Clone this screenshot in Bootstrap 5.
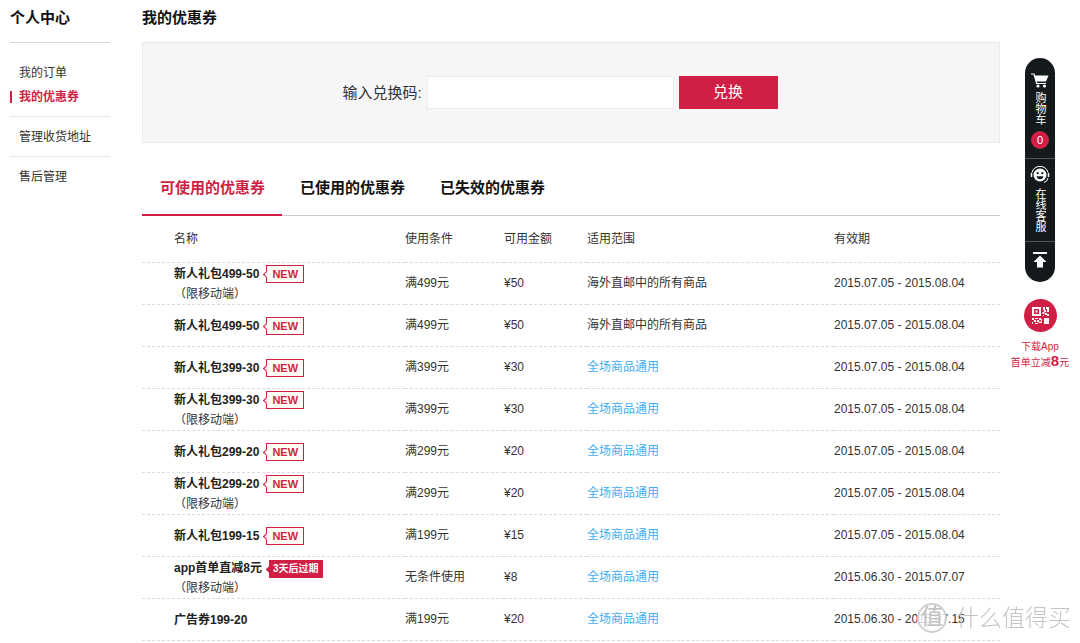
<!DOCTYPE html>
<html lang="zh-CN">
<head>
<meta charset="utf-8">
<meta name="viewport" content="width=device-width, initial-scale=1">
<title>我的优惠券</title>
<link href="https://cdn.jsdelivr.net/npm/bootstrap@5.3.0/dist/css/bootstrap.min.css" rel="stylesheet">
<script src="https://cdn.jsdelivr.net/npm/bootstrap@5.3.0/dist/js/bootstrap.bundle.min.js" defer></script>
<style>
:root { --brand: #d01f44; --line: #d6d6d6; --ink: #14191c; }
body { font: 12px/20px "Liberation Sans", "Noto Sans CJK SC", sans-serif; color: #333; background: #fff; }
a { color: inherit; text-decoration: none; }
.page-title { font-size: 15px; line-height: 20px; font-weight: 700; color: #111; margin: 0; padding: 8px 0 14px; }
.side-col { width: 100px; margin-left: 10px; margin-right: 32px; }
.side-group { border-bottom: 1px solid #e8e8e8; padding: 8px 0 7px; margin: 0; }
.side-group:first-of-type { border-top: 1px solid var(--line); padding-top: 18px; }
.side-group:last-of-type { border-bottom: 0; }
.side-group a { display: block; line-height: 24px; padding-left: 9px; }
.side-group a.active { color: var(--brand); font-weight: 700; background: linear-gradient(var(--brand), var(--brand)) left center / 2px 12px no-repeat; }
.redeem { background: #f6f6f6; border: 1px solid #ebebeb; padding: 33px 22px 33px 0; gap: 5px; }
.redeem label { font-size: 15px; }
.redeem input { width: 247px; height: 33px; border: 1px solid #e9eeee; border-radius: 0; padding: 4px 8px; font-size: 14px; }
.redeem .btn { width: 99px; height: 33px; border: 0; border-radius: 0; padding: 0; background: var(--brand); color: #fff; font-size: 15px; }
.coupon-tabs { border-bottom: 1px solid #ccc; margin-top: 25px; }
.coupon-tabs .nav-link { padding: 8px 17px 14px 18px; border-bottom: 2px solid transparent; margin-bottom: -1px; font-size: 15px; line-height: 24px; font-weight: 700; color: #111; }
.coupon-tabs .nav-link.active { color: var(--brand); border-color: var(--brand); }
.coupons { table-layout: fixed; color: #333; }
.coupons th, .coupons td { padding: 0; height: 42px; border: 0; border-bottom: 1px dashed #dcdcdc; vertical-align: middle; color: inherit; background: none; }
.coupons thead th { height: 46px; font-weight: 400; }
.coupons tr > :first-child { padding-left: 32px; }
.coupons tbody th { font-weight: 400; padding-top: 1px; }
.coupons td a { color: #43adf2; }
.coupons strong { color: #222; }
.tag { display: inline-block; position: relative; margin-left: 7px; padding: 0 5px; line-height: 16px; border: 1px solid var(--brand); background: #fffdf6; color: var(--brand); font-size: 11px; font-weight: 700; }
.tag::before { content: ""; position: absolute; left: -3px; top: 6px; width: 5px; height: 5px; border: solid var(--brand); border-width: 0 0 1px 1px; background: inherit; transform: rotate(45deg); }
.tag-due { background: var(--brand); color: #fff; padding: 0 3px; font-size: 10px; }
.float-col { width: 80px; padding-top: 58px; }
.pill { width: 30px; background: var(--ink); color: #fff; border-radius: 15px; }
.pill > * { width: 100%; }
.pill > * + * { border-top: 1px solid #50565a; }
.pill .cart-link { height: 100px; padding-top: 15px; }
.pill .help-link { height: 83px; padding-top: 7px; }
.pill .top-btn { height: 41px; padding: 0; background: none; color: #fff; border-width: 1px 0 0; border-style: solid; }
.upright { writing-mode: vertical-rl; font-size: 11px; line-height: 12px; }
.count { width: 18px; height: 18px; line-height: 18px; background: var(--brand); font-size: 11px; margin-top: 6px; }
.qr { width: 33px; height: 33px; background: var(--brand); margin: 17px 0 8px; }
.app-note { color: var(--brand); font-size: 10px; line-height: 14px; }
.app-note b { font-size: 15px; }
.watermark { position: fixed; right: 9px; bottom: 8px; color: #c4c4c4; font-size: 23px; line-height: 34px; font-weight: 300; gap: 9px; }
.watermark .disc { width: 30px; height: 30px; line-height: 24px; border: 2px solid #d0d0d0; background: rgba(255,255,255,.8); font-size: 22px; font-weight: 500; }
</style>
</head>
<body>
<div class="d-flex align-items-start">
  <nav class="side-col flex-shrink-0" aria-label="个人中心">
    <h2 class="page-title">个人中心</h2>
    <ul class="list-unstyled side-group">
      <li><a href="#">我的订单</a></li>
      <li><a href="#" class="active" aria-current="page">我的优惠券</a></li>
    </ul>
    <ul class="list-unstyled side-group"><li><a href="#">管理收货地址</a></li></ul>
    <ul class="list-unstyled side-group"><li><a href="#">售后管理</a></li></ul>
  </nav>

  <main class="flex-grow-1">
    <h1 class="page-title">我的优惠券</h1>
    <form class="redeem d-flex justify-content-center align-items-center">
      <label for="code">输入兑换码:</label>
      <input id="code" type="text" class="form-control">
      <button type="button" class="btn">兑换</button>
    </form>

    <ul class="nav coupon-tabs">
      <li class="nav-item"><a class="nav-link active" href="#">可使用的优惠券</a></li>
      <li class="nav-item"><a class="nav-link" href="#">已使用的优惠券</a></li>
      <li class="nav-item"><a class="nav-link" href="#">已失效的优惠券</a></li>
    </ul>

    <table class="table coupons mb-0">
      <colgroup><col width="263"><col width="99"><col width="83"><col width="247"><col width="166"></colgroup>
      <thead>
        <tr><th scope="col">名称</th><th scope="col">使用条件</th><th scope="col">可用金额</th><th scope="col">适用范围</th><th scope="col">有效期</th></tr>
      </thead>
      <tbody>
        <tr><th scope="row"><strong>新人礼包499-50</strong><span class="tag">NEW</span><br>（限移动端）</th><td>满499元</td><td>¥50</td><td>海外直邮中的所有商品</td><td>2015.07.05 - 2015.08.04</td></tr>
        <tr><th scope="row"><strong>新人礼包499-50</strong><span class="tag">NEW</span></th><td>满499元</td><td>¥50</td><td>海外直邮中的所有商品</td><td>2015.07.05 - 2015.08.04</td></tr>
        <tr><th scope="row"><strong>新人礼包399-30</strong><span class="tag">NEW</span></th><td>满399元</td><td>¥30</td><td><a href="#">全场商品通用</a></td><td>2015.07.05 - 2015.08.04</td></tr>
        <tr><th scope="row"><strong>新人礼包399-30</strong><span class="tag">NEW</span><br>（限移动端）</th><td>满399元</td><td>¥30</td><td><a href="#">全场商品通用</a></td><td>2015.07.05 - 2015.08.04</td></tr>
        <tr><th scope="row"><strong>新人礼包299-20</strong><span class="tag">NEW</span></th><td>满299元</td><td>¥20</td><td><a href="#">全场商品通用</a></td><td>2015.07.05 - 2015.08.04</td></tr>
        <tr><th scope="row"><strong>新人礼包299-20</strong><span class="tag">NEW</span><br>（限移动端）</th><td>满299元</td><td>¥20</td><td><a href="#">全场商品通用</a></td><td>2015.07.05 - 2015.08.04</td></tr>
        <tr><th scope="row"><strong>新人礼包199-15</strong><span class="tag">NEW</span></th><td>满199元</td><td>¥15</td><td><a href="#">全场商品通用</a></td><td>2015.07.05 - 2015.08.04</td></tr>
        <tr><th scope="row"><strong>app首单直减8元</strong><span class="tag tag-due">3天后过期</span><br>（限移动端）</th><td>无条件使用</td><td>¥8</td><td><a href="#">全场商品通用</a></td><td>2015.06.30 - 2015.07.07</td></tr>
        <tr><th scope="row"><strong>广告券199-20</strong></th><td>满199元</td><td>¥20</td><td><a href="#">全场商品通用</a></td><td>2015.06.30 - 2015.07.15</td></tr>
      </tbody>
    </table>
  </main>

  <aside class="float-col flex-shrink-0 d-flex flex-column align-items-center">
    <div class="pill d-flex flex-column overflow-hidden">
      <a href="#" class="cart-link d-flex flex-column align-items-center">
        <svg width="18" height="15" viewBox="0 0 18 15" class="mb-1" aria-hidden="true"><path d="M0 1h3l2.600 9.500H15" fill="none" stroke="#fff" stroke-width="1.200"/><path d="M3.500 2.500H17.500L15 8.500H5.300z" fill="#fff"/><circle cx="7" cy="13" r="1.600" fill="#fff"/><circle cx="13.500" cy="13" r="1.600" fill="#fff"/></svg>
        <span class="upright">购物车</span>
        <span class="count rounded-circle text-center">0</span>
      </a>
      <a href="#" class="help-link d-flex flex-column align-items-center">
        <svg width="20" height="18" viewBox="0 0 20 18" class="mb-1" aria-hidden="true"><circle cx="10" cy="9" r="6.500" fill="#fff"/><path d="M2 6.500A8.300 8.300 0 0 1 18 6.500" fill="none" stroke="#fff" stroke-width="1"/><path d="M1.500 7v4M18.500 7v4" stroke="#fff" stroke-width="1.500"/><path d="M18 12q-.500 3.500-4 4.500" fill="none" stroke="#fff"/><circle cx="7.700" cy="7.200" r="1.100" fill="#14191c"/><circle cx="12.300" cy="7.200" r="1.100" fill="#14191c"/><path d="M6.500 10.200h7q-.800 3-3.500 3t-3.500-3z" fill="#14191c"/></svg>
        <span class="upright">在线客服</span>
      </a>
      <button type="button" class="top-btn" aria-label="返回顶部">
        <svg class="d-block mx-auto mb-1" width="14" height="16" viewBox="0 0 14 16" aria-hidden="true"><path d="M0 0h14v2H0zM7 3.500L13.500 10H10v5.500H4V10H.500z" fill="#fff"/></svg>
      </button>
    </div>
    <a href="#" class="qr rounded-circle d-flex align-items-center justify-content-center" aria-label="下载App">
      <svg width="17" height="17" viewBox="0 0 17 17" fill="#fff" aria-hidden="true"><path fill-rule="evenodd" d="M0 0h9v9H0zM2 2v5h5V2z"/><path d="M3.500 3.500h2v2h-2zM11 0h2v3h-2zM14 0h3v2h-3zM15 2h2v3h-2zM12 3h2v2h-2zM10.500 5h2v2h-2zM13 6h2v2h-2zM15 7h2v2h-2zM11 8h1v1h-1zM0 11h2v2H0zM3 11h3v1H3zM7 11h2v2H7zM2 13h2v2H2zM5 13h2v2H5zM0 15h1v2H0zM3 16h3v1H3zM7 14.500h3v1.500H7zM9 12h1v2H9zM12 11h5v6h-5z"/></svg>
    </a>
    <a href="#" class="app-note text-center text-nowrap">下载App<br>首单立减<b>8</b>元</a>
  </aside>
</div>
<div class="watermark d-flex align-items-center pe-none"><span class="disc rounded-circle text-center">值</span><span>什么值得买</span></div>
</body>
</html>
